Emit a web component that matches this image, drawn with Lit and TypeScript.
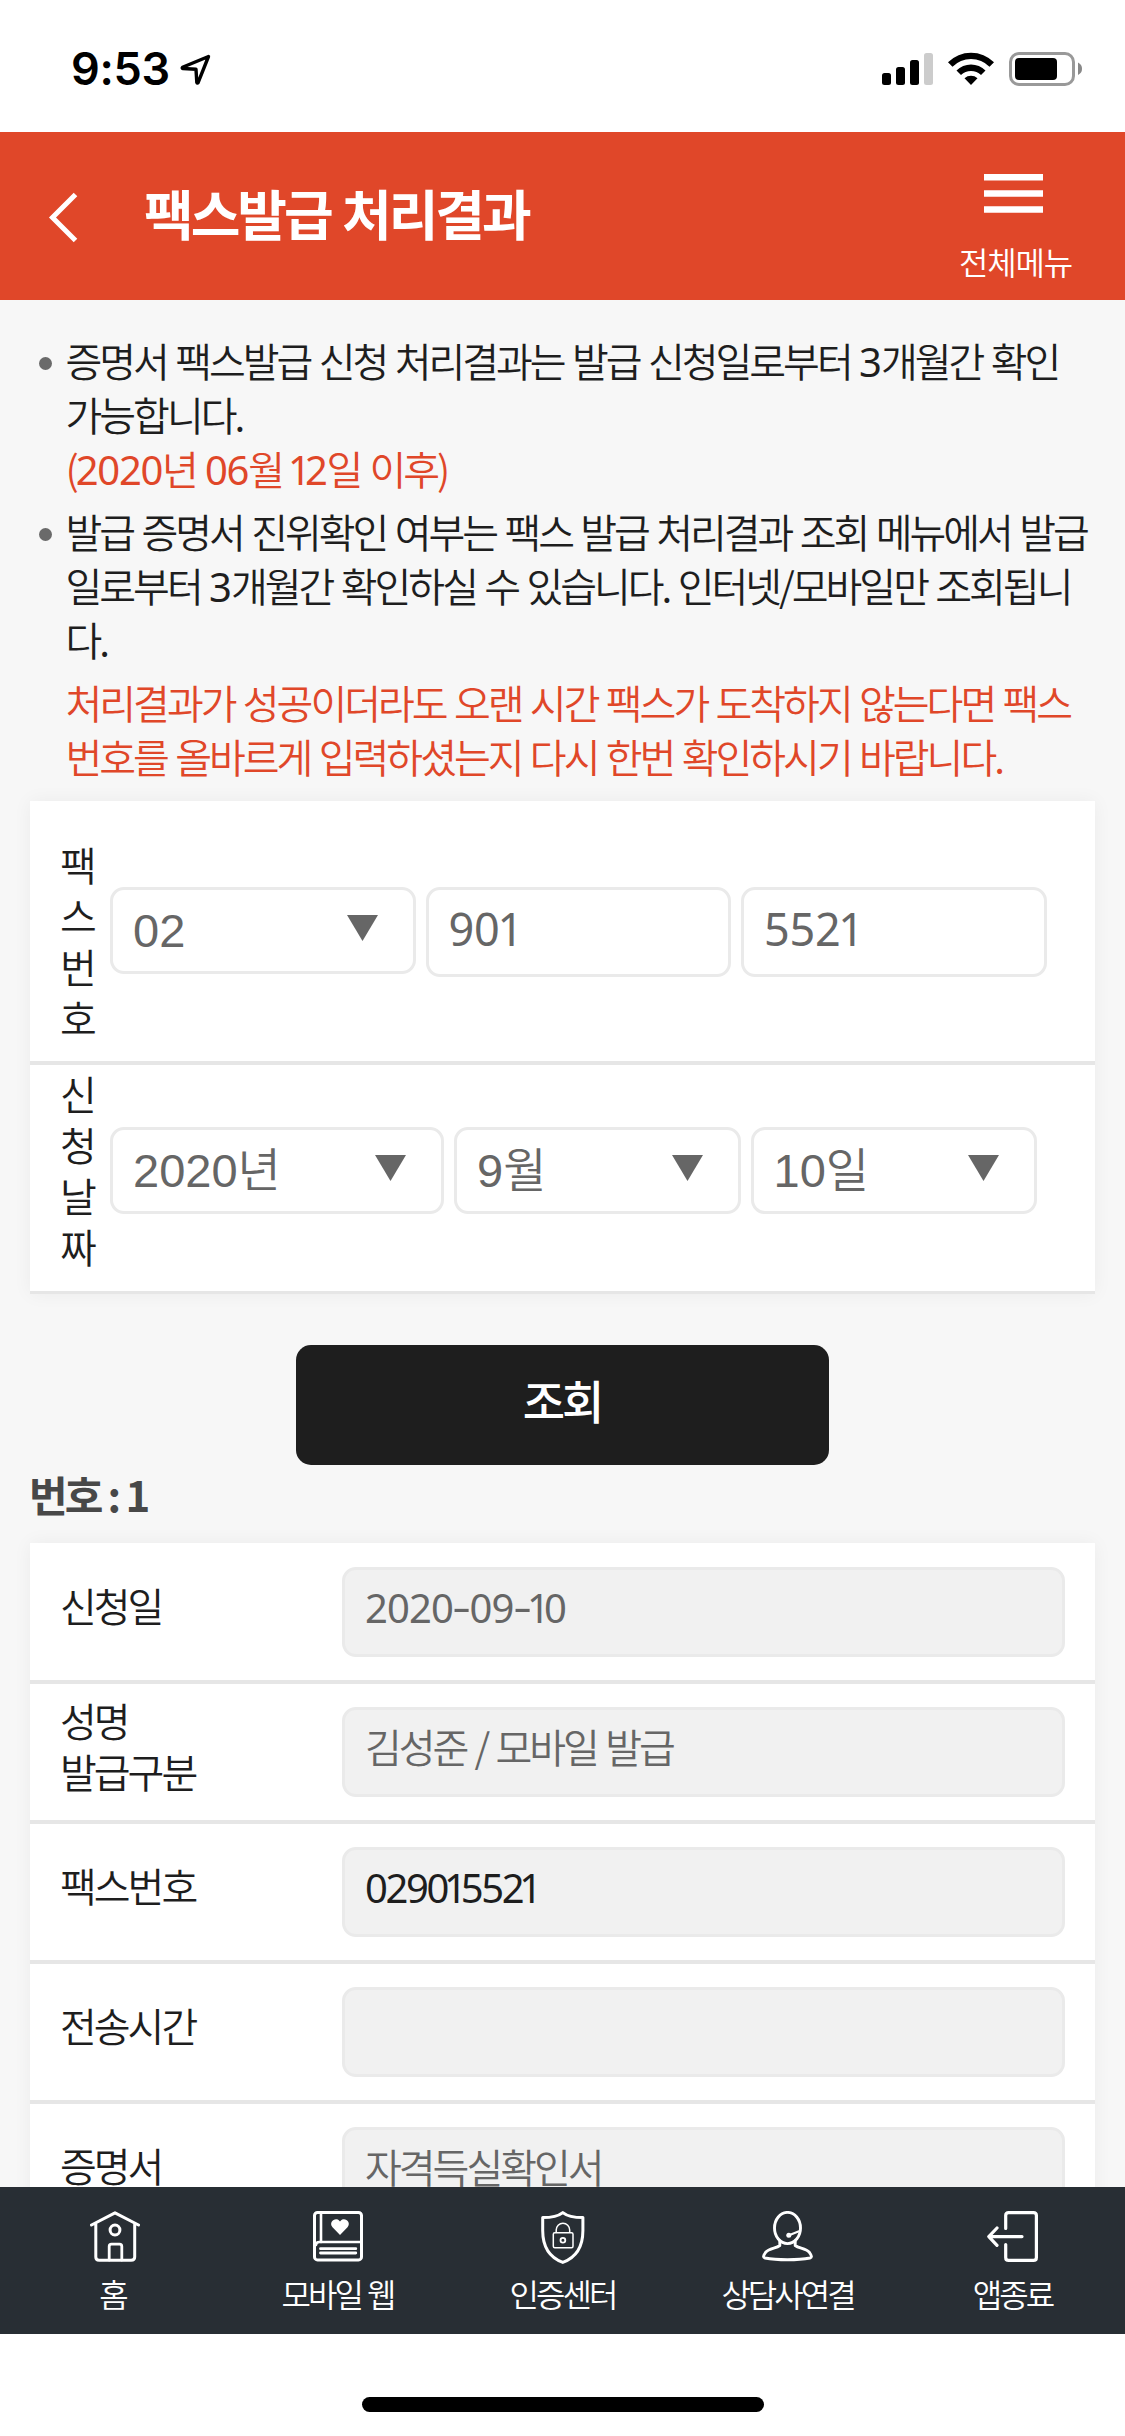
import { LitElement, html, svg, css, TemplateResult } from "lit";
import { customElement } from "lit/decorators.js";

/** Sets the digits of a string in the Latin face, with a tighter "1" and a wider hyphen. */
const mix = (text: string): (string | TemplateResult)[] =>
  text
    .split(/(1|-|[02-9]+)/)
    .filter((s) => s !== "")
    .map((s) => {
      if (s === "1") return html`<span class="d one">1</span>`;
      if (s === "-") return html`<span class="d hy">-</span>`;
      return /^\d+$/.test(s) ? html`<span class="d">${s}</span>` : s;
    });

interface Row {
  label: string[];
  value: string;
  dark?: boolean;
}

const rows: Row[] = [
  { label: ["신청일"], value: "2020-09-10" },
  { label: ["성명", "발급구분"], value: "김성준 / 모바일 발급" },
  { label: ["팩스번호"], value: "029015521", dark: true },
  { label: ["전송시간"], value: "" },
  { label: ["증명서"], value: "자격득실확인서" },
];

const icons = {
  home: svg`<svg class="house" width="50" height="51" viewBox="0 0 50 51" fill="none" stroke="#fff" stroke-width="3" stroke-linecap="round" stroke-linejoin="round">
    <path d="M1.5 14 25 1.8 48.5 14M5.8 12.5V46q0 3.3 3.3 3.3h32q3.6 0 3.6-3.3V12.5"/><ellipse cx="25" cy="19" rx="4.9" ry="5"/>
    <path d="M19.2 49V35.5q0-2.3 2.3-2.3h8q2.3 0 2.3 2.3V49" stroke-width="2.8"/></svg>`,
  book: svg`<svg width="50" height="51" viewBox="0 0 50 51" fill="none" stroke="#fff" stroke-width="3" stroke-linecap="round">
    <rect x="1.5" y="1.5" width="47" height="47.4" rx="3"/><path d="M8 2V31" stroke-width="2.6"/><path d="M3 34q0-3 3.500-3H48" stroke-width="2.6"/>
    <path d="M7.500 37.700H42.800M7.500 42H42.800" stroke-width="2.8"/>
    <path d="M27 24 19.500 16.300C16 12 20 7.800 23.500 8.200 25.500 8.500 26.500 9.600 27 10.600 27.500 9.600 28.500 8.500 30.500 8.200 34 7.800 38 12 34.500 16.300Z" fill="#fff" stroke="none"/></svg>`,
  shield: svg`<svg width="44" height="53" viewBox="0 0 44 53" fill="none" stroke="#fff" stroke-width="3" stroke-linejoin="round">
    <path d="M21.800 1.600C17 5.400 9.500 6.600 1.700 6.600V19.500C1.700 35 8.500 46.500 21.800 51.400 35 46.500 41.900 35 41.900 19.500V6.600C34 6.600 26.500 5.400 21.800 1.600Z"/>
    <g stroke-width="1.500"><rect x="12.300" y="21.700" width="19.700" height="15" rx="1.500"/><path d="M15.200 21.500V19a6.700 6.700 0 0 1 13.500 0v2.500"/></g>
    <circle cx="21.900" cy="29.200" r="2.400" stroke-width="1.800"/></svg>`,
  agent: svg`<svg width="51" height="51" viewBox="0 0 51 51" fill="none" stroke="#fff" stroke-width="2.900" stroke-linecap="round" stroke-linejoin="round">
    <ellipse cx="25.500" cy="17" rx="13" ry="15.600"/>
    <path d="M17.800 30V34.500C14 37.500 7 37 3.500 41.500 1 45 1 46.500 3 47 15 49.300 36 49.300 48 47 50 46.500 50 45 47.500 41.500 44 37 37 37.500 33.200 34.500V30"/>
    <path d="M27 24.300 37 20.300" stroke-width="2"/><circle cx="26.800" cy="24.300" r="2.500" fill="#fff" stroke="none"/></svg>`,
  exit: svg`<svg width="51" height="51" viewBox="0 0 51 51" fill="none" stroke="#fff" stroke-width="3.200" stroke-linecap="round" stroke-linejoin="round">
    <path d="M18.700 17.500V4.600q0-3 3-3H46.400q3 0 3 3V46.400q0 3-3 3H21.700q-3 0-3-3V33.500M1.800 25.600H35M10 17 1.800 25.600 10 34.300"/></svg>`,
};

const tabs = [
  { label: "홈", icon: icons.home },
  { label: "모바일 웹", icon: icons.book },
  { label: "인증센터", icon: icons.shield },
  { label: "상담사연결", icon: icons.agent },
  { label: "앱종료", icon: icons.exit },
];

@customElement("app-root")
export class AppRoot extends LitElement {
  static styles = css`
    :host {
      display: flex;
      flex-direction: column;
      width: 1125px;
      height: 2436px;
      overflow: hidden;
      background: #fff;
      color: #1e1e1e;
      font-family: "Noto Sans CJK KR", sans-serif;
      font-weight: 350;
      font-size: 40px;
      letter-spacing: -3px;
    }
    * { box-sizing: border-box; }
    svg { display: block; flex: none; }
    .d { font-family: "Noto Sans", sans-serif; font-weight: 370; line-height: 0; letter-spacing: -0.9px; }
    .one { letter-spacing: -6px; margin-left: -3px; }
    .hy { display: inline-block; transform: translateY(-2px) scaleX(1.450); margin: 0 2.300px; }

    .status { flex: none; height: 132px; display: flex; align-items: flex-start; padding: 52px 42px 0 71px; color: #000; }
    .time { font: 600 45px/34px Inter, sans-serif; letter-spacing: -0.3px; }
    .loc { margin: 2px 0 0 10px; }
    .sys { margin-left: auto; }

    .head { flex: none; height: 168px; display: flex; background: #e04729; color: #fff; padding: 0 53px 0 48px; }
    .back { margin-top: 60px; }
    h1 { margin: 0 0 0 65px; font-size: 54px; font-weight: 700; line-height: 80px; padding-top: 41px; letter-spacing: -3px; word-spacing: 2px; }
    .menu { margin-left: auto; padding-top: 42px; display: flex; flex-direction: column; align-items: center; font-size: 32px; letter-spacing: -1.200px; line-height: 40px; }
    .menu svg { margin: 0 4px 28px 0; }

    main { flex: 1; min-height: 0; overflow: hidden; background: #f7f7f7; padding: 33px 30px 0; }
    .notes { margin: 0; padding: 0 0 0 35.500px; list-style: none; line-height: 54px; word-spacing: 2.400px; white-space: nowrap; }
    .notes li { position: relative; margin-bottom: 9px; }
    .notes li.dot::before { content: ""; position: absolute; left: -27px; top: 24px; width: 13px; height: 13px; border-radius: 50%; background: #6a6a6a; }
    .red { color: #e04729; }
    .date { word-spacing: 3.200px; }
    .date .d { letter-spacing: -1.300px; }
    .date .one { letter-spacing: -6px; margin-left: -3px; }

    .card { background: #fff; box-shadow: 0 0 18px rgba(0, 0, 0, 0.05); }
    .search { margin-top: 18px; }
    .line { display: flex; gap: 10px; align-items: flex-start; padding-left: 30px; border-bottom: 4px solid #e6e6e6; }
    .line.fax { height: 264px; }
    .line.day { height: 229px; border-bottom-width: 3px; }
    .vert { width: 40px; line-height: 51px; word-break: break-all; }
    .fax .vert { padding-top: 38px; }
    .day .vert { padding-top: 3px; }
    .box { height: 87px; border: 3px solid #eaeaea; border-radius: 14px; background: #fff; color: #666; display: flex; align-items: center; padding: 0 35px 0 20px; }
    .fax .box { width: 305.500px; margin-top: 86px; }
    .fax .box.num { height: 90px; }
    .day .box { margin-top: 62px; width: 286.500px; }
    .day .box.year { width: 334px; }
    .sel { font-family: "Liberation Sans", "Noto Sans CJK KR", sans-serif; font-size: 47px; line-height: 60px; letter-spacing: 0; font-weight: 350; }
    .sel svg { margin: 0 0 6px auto; }
    .num { font-size: 45px; padding-bottom: 12px; }
    .num .d { letter-spacing: -0.300px; }
    .num .one { letter-spacing: -6px; margin-left: -2px; }

    .go { display: block; margin: 51px auto 0; width: 533px; height: 120px; border: 0; border-radius: 15px; background: #1e1e1e; color: #fff; font: 500 46px/60px "Noto Sans CJK KR", sans-serif; letter-spacing: -3px; padding: 0 1px 12px 0; }
    h2 { margin: -1px 0 0 -1px; height: 79px; font-size: 42px; font-weight: 700; line-height: 60px; color: #484848; word-spacing: 0.800px; }

    .row { display: flex; align-items: center; height: 140px; border-bottom: 4px solid #e6e6e6; padding: 0 30px; }
    .row:first-child { height: 141px; }
    .key { width: 282px; line-height: 51px; padding-bottom: 13px; }
    .val { flex: 1; height: 90px; border: 3px solid #eaeaea; border-radius: 14px; background: #f1f1f1; color: #666; line-height: 73px; padding-left: 20px; word-spacing: 2.300px; }
    .val.dark { color: #1e1e1e; }
    .dark .d { letter-spacing: -2.400px; }
    .dark .one { letter-spacing: -6px; margin-left: -3px; }

    nav { flex: none; height: 147px; display: grid; grid-template-columns: repeat(5, 225px); background: #282e34; color: #fff; }
    .tab { display: flex; flex-direction: column; align-items: center; padding-top: 24px; font-size: 32px; line-height: 40px; word-spacing: 2px; }
    .ico { height: 61.500px; }
    .house { margin-left: 5px; }
    .home { flex: none; height: 102px; padding-top: 63px; }
    .bar { width: 402px; height: 15px; margin: 0 auto; border-radius: 8px; background: #000; }
  `;

  private arrow() {
    return html`<svg width="31" height="26" viewBox="0 0 31 26"><path d="M0 0H31L15.500 26Z" fill="#666" /></svg>`;
  }

  render() {
    return html`
      <div class="status">
        <div class="time">9:53</div>
        <svg class="loc" width="32" height="32" viewBox="0 0 32 32" fill="none" stroke="#000" stroke-width="3.400" stroke-linejoin="round">
          <path d="M28.500 2.500 2.500 13.300q-.8.900.5 1.200L16 15.300l.8 13q.5 1.300 1.300.3Z" />
        </svg>
        <svg class="sys" width="201" height="34" viewBox="882 52 201 34">
          <rect x="882" y="73" width="9" height="12" rx="2.500" /><rect x="896" y="67" width="9" height="18" rx="2.500" />
          <rect x="910" y="60" width="9" height="25" rx="2.500" /><rect x="924" y="53" width="9" height="32" rx="2.500" fill="#ccc" />
          <path d="M948 62.300A32.500 32.500 0 0 1 994 62.300L989.500 66.800A26 26 0 0 0 952.500 66.800ZM956.500 70.500A20.500 20.500 0 0 1 985.500 70.500L981 75A14.200 14.200 0 0 0 961 75ZM964.500 78.200A10 10 0 0 1 977.500 78.200L971 85Z" />
          <rect x="1010.500" y="53.500" width="63" height="31" rx="8.500" fill="none" stroke="#999" stroke-width="3" />
          <rect x="1015" y="58" width="42" height="22" rx="4" /><path d="M1078 62.500Q1082 64.500 1082 68.800T1078 75Z" fill="#888" />
        </svg>
      </div>

      <header class="head">
        <svg class="back" width="31" height="51" viewBox="0 0 31 51" fill="none" stroke="#fff" stroke-width="5"><path d="M27.500 2.500 4.500 25.500 27.500 48.500" /></svg>
        <h1>팩스발급 처리결과</h1>
        <div class="menu">
          <svg width="59" height="39" viewBox="0 0 59 39" fill="#fff"><path d="M0 0H59V6.500H0ZM0 16.200H59V22.700H0ZM0 32.300H59V38.800H0Z" /></svg>
          <span>전체메뉴</span>
        </div>
      </header>

      <main>
        <ul class="notes">
          <li class="dot">
            ${mix("증명서 팩스발급 신청 처리결과는 발급 신청일로부터 3개월간 확인")}<br />가능합니다.<br />
            <span class="red date">${mix("(2020년 06월 12일 이후)")}</span>
          </li>
          <li class="dot">
            발급 증명서 진위확인 여부는 팩스 발급 처리결과 조회 메뉴에서 발급<br />
            ${mix("일로부터 3개월간 확인하실 수 있습니다. 인터넷/모바일만 조회됩니")}<br />다.
          </li>
          <li class="red">
            처리결과가 성공이더라도 오랜 시간 팩스가 도착하지 않는다면 팩스<br />번호를 올바르게 입력하셨는지 다시 한번 확인하시기 바랍니다.
          </li>
        </ul>

        <section class="card search">
          <div class="line fax">
            <div class="vert">팩스번호</div>
            <div class="box sel">02${this.arrow()}</div>
            <div class="box num"><span>${mix("901")}</span></div>
            <div class="box num"><span>${mix("5521")}</span></div>
          </div>
          <div class="line day">
            <div class="vert">신청날짜</div>
            <div class="box sel year">2020년${this.arrow()}</div>
            <div class="box sel">9월${this.arrow()}</div>
            <div class="box sel">10일${this.arrow()}</div>
          </div>
        </section>

        <button class="go">조회</button>
        <h2>번호 : 1</h2>

        <section class="card">
          ${rows.map(
            (r) => html`<div class="row">
              <div class="key">${r.label.map((l) => html`<div>${l}</div>`)}</div>
              <div class="val ${r.dark ? "dark" : ""}">${mix(r.value)}</div>
            </div>`
          )}
        </section>
      </main>

      <nav>${tabs.map((t) => html`<div class="tab"><div class="ico">${t.icon}</div><span>${t.label}</span></div>`)}</nav>
      <div class="home"><div class="bar"></div></div>
    `;
  }
}
